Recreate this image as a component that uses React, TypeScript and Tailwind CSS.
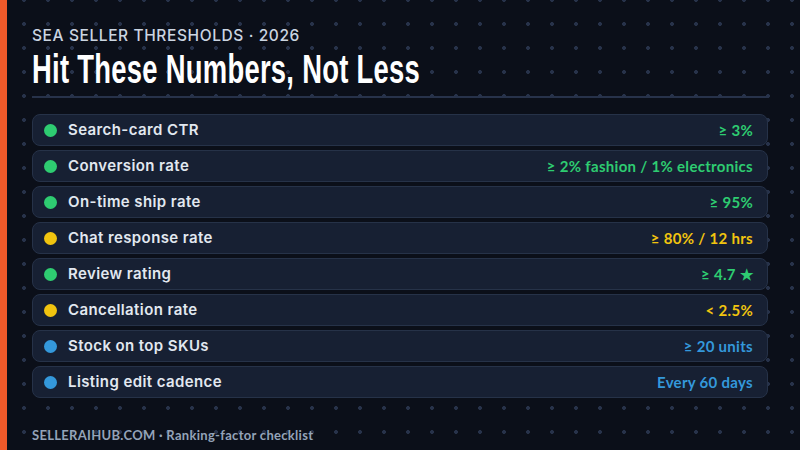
import React from 'react';

interface Metric {
  label: string;
  value: string;
  tone: 'green' | 'yellow' | 'blue';
}

const metrics: Metric[] = [
  { label: 'Search-card CTR', value: '≥ 3%', tone: 'green' },
  { label: 'Conversion rate', value: '≥ 2% fashion / 1% electronics', tone: 'green' },
  { label: 'On-time ship rate', value: '≥ 95%', tone: 'green' },
  { label: 'Chat response rate', value: '≥ 80% / 12 hrs', tone: 'yellow' },
  { label: 'Review rating', value: '≥ 4.7 ★', tone: 'green' },
  { label: 'Cancellation rate', value: '< 2.5%', tone: 'yellow' },
  { label: 'Stock on top SKUs', value: '≥ 20 units', tone: 'blue' },
  { label: 'Listing edit cadence', value: 'Every 60 days', tone: 'blue' },
];

const dotColor = {
  green: 'bg-[#2ecc71]',
  yellow: 'bg-[#f1c40f]',
  blue: 'bg-[#3498db]',
};

const textColor = {
  green: 'text-[#2ecc71]',
  yellow: 'text-[#f1c40f]',
  blue: 'text-[#3498db]',
};

const App: React.FC = () => {
  return (
    <div className="w-[800px] h-[450px] flex overflow-hidden bg-[#0b0f19] bg-[radial-gradient(circle,#27324a_1.7px,transparent_2.2px)] bg-[length:24px_24px] bg-[position:-12px_-12px]">
      {/* accent bar */}
      <div className="w-[7px] h-full bg-[#f05a2a] shrink-0" />

      <div className="flex-1 flex flex-col pl-[25px] pr-[32px]">
        <div className="pt-[26px] text-[15.5px] leading-[20px] font-medium tracking-[0.6px] text-[#cbd5e1] font-['Inter',sans-serif]">
          SEA SELLER THRESHOLDS · 2026
        </div>
        <h1 className="mt-[5px] h-[36px] whitespace-nowrap">
          <span className="inline-block origin-left scale-x-[0.685] text-[40px] leading-[36px] font-bold text-white font-['Liberation_Sans',sans-serif] tracking-[0.4px]">
            Hit These Numbers, Not Less
          </span>
        </h1>
        <div className="mt-[9px] h-[2px] bg-[#27324a]" />

        <div className="mt-[16px] flex flex-col gap-[4px]">
          {metrics.map((m) => (
            <div
              key={m.label}
              className="h-[32px] flex items-center justify-between rounded-[8px] border border-[#263248] bg-[#172033] pl-[11px] pr-[14px]"
            >
              <div className="flex items-center gap-[11px]">
                <span className={`w-[13px] h-[13px] rounded-full ${dotColor[m.tone]}`} />
                <span className="text-[15px] font-semibold text-[#e2e8f0] font-['Inter',sans-serif] tracking-[0.4px]">
                  {m.label}
                </span>
              </div>
              <span className={`text-[15px] font-bold font-['Lato',sans-serif] tracking-[0.3px] ${textColor[m.tone]}`}>
                {m.value}
              </span>
            </div>
          ))}
        </div>

        <div className="mt-auto pb-[5px] text-[13px] font-bold text-[#94a3b8] font-['Lato',sans-serif] tracking-[0.3px]">
          SELLERAIHUB.COM · Ranking-factor checklist
        </div>
      </div>
    </div>
  );
};

export default App;
